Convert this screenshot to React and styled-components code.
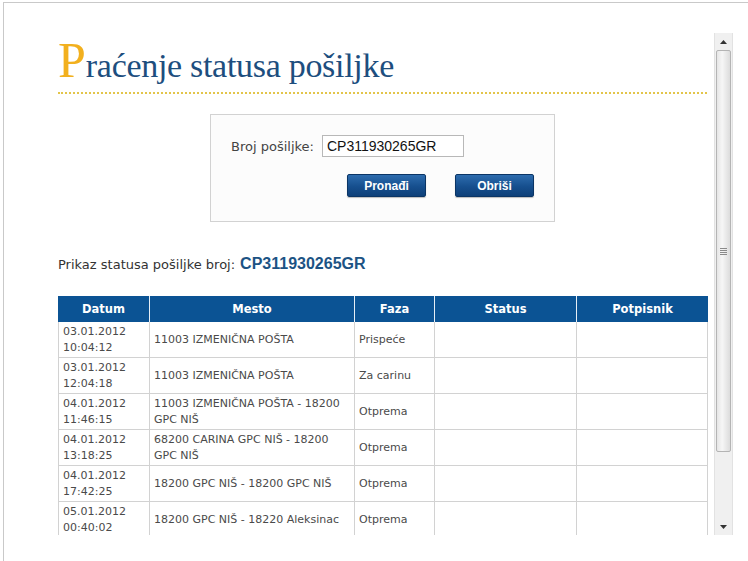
import React from "react";
import styled, { createGlobalStyle } from "styled-components";

const Global = createGlobalStyle`
  html, body { margin: 0; padding: 0; background: #fff; }
  body { font-family: "DejaVu Sans", Verdana, sans-serif; }
`;

const Screen = styled.div`
  width: 748px;
  height: 561px;
  padding: 2px 0 0 3px;
  box-sizing: border-box;
  overflow: hidden;
  background: #fff;
`;

const Frame = styled.div`
  height: 100%;
  border-top: 1px solid #c9c9c9;
  border-left: 1px solid #c9c9c9;
  box-sizing: border-box;
  padding-top: 30px;
`;

const Viewport = styled.div`
  display: flex;
  width: 729px;
  height: 502px;
`;

const Content = styled.div`
  flex: 1;
  overflow: hidden;
  padding: 4px 7px 0 54px;
  box-sizing: border-box;
`;

const Title = styled.h1`
  margin: 0;
  font-family: "Liberation Serif", "Times New Roman", serif;
  font-weight: normal;
  font-size: 34px;
  letter-spacing: -0.3px;
  line-height: 46px;
  color: #1d4e7e;
  white-space: nowrap;
`;

const Initial = styled.span`
  font-size: 50px;
  color: #f2b01e;
  letter-spacing: 0;
`;

const DottedRule = styled.div`
  margin-top: 3px;
  border-bottom: 2px dotted #e3c54a;
`;

const FormBox = styled.div`
  width: 345px;
  height: 108px;
  box-sizing: border-box;
  margin: 20px auto 0;
  border: 1px solid #d2d2d2;
  background: #fcfcfc;
  padding: 20px 20px 0 20px;
`;

const FieldRow = styled.div`
  display: flex;
  align-items: center;
  gap: 8px;
`;

const Label = styled.label`
  font-size: 13px;
  color: #444;
`;

const Input = styled.input`
  width: 142px;
  height: 22px;
  box-sizing: border-box;
  border: 1px solid #b8b8b8;
  padding: 0 4px;
  font-family: "Liberation Sans", Arial, sans-serif;
  font-size: 14px;
  color: #111;
  background: #fff;
  outline: none;
`;

const ButtonRow = styled.div`
  display: flex;
  gap: 29px;
  margin: 17px 0 0 116px;
`;

const Button = styled.button`
  width: 79px;
  height: 23px;
  border: 1px solid #0b3565;
  border-radius: 2px;
  background: linear-gradient(#2d6cae, #164f8e 55%, #0e4079);
  box-shadow: 0 1px 1px rgba(0,0,0,0.25);
  color: #fff;
  font-family: "Liberation Sans", Arial, sans-serif;
  font-weight: bold;
  font-size: 12px;
  padding: 0;
  cursor: pointer;
`;

const Summary = styled.div`
  margin-top: 33px;
  font-size: 13px;
  color: #333;
  display: flex;
  align-items: baseline;
  gap: 5px;
`;

const Number = styled.span`
  font-family: "Liberation Sans", Arial, sans-serif;
  font-weight: bold;
  font-size: 16px;
  color: #1c5384;
`;

const Table = styled.table`
  margin-top: 23px;
  width: 650px;
  table-layout: fixed;
  border-collapse: separate;
  border-spacing: 0;
`;

const Th = styled.th`
  background: #0b5394;
  color: #fff;
  font-size: 11.5px;
  font-weight: bold;
  height: 26px;
  padding: 0;
  text-align: center;
  border-right: 1px solid #e6eef6;
  &:last-child { border-right: none; }
`;

const Td = styled.td`
  font-size: 11px;
  line-height: 16px;
  color: #4a4a4a;
  padding: 2px 4px 1px;
  border-right: 1px solid #d2d2d2;
  border-bottom: 1px solid #d2d2d2;
  vertical-align: middle;
  &:first-child { border-left: 1px solid #d2d2d2; }
`;

const Scrollbar = styled.div`
  width: 17px;
  height: 100%;
  display: flex;
  flex-direction: column;
  background: #f0f0f0;
  border-left: 1px solid #e2e2e2;
  border-right: 1px solid #e2e2e2;
  box-sizing: content-box;
`;

const Arrow = styled.div`
  height: 17px;
  display: flex;
  align-items: center;
  justify-content: center;
  flex: none;
`;

const Thumb = styled.div`
  flex: 0 0 400px;
  margin: 0 1px;
  border: 1px solid #b4b4b4;
  border-radius: 2px;
  background: linear-gradient(90deg, #e6e6e6, #f6f6f6 40%, #dcdcdc);
  display: flex;
  align-items: center;
  justify-content: center;
`;

const Grip = styled.div`
  width: 7px;
  height: 7px;
  background: repeating-linear-gradient(#8a8a8a 0 1px, transparent 1px 2px);
`;

const Track = styled.div`
  flex: 1;
`;

const rows = [
  ["03.01.2012", "10:04:12", "11003 IZMENIČNA POŠTA", "Prispeće"],
  ["03.01.2012", "12:04:18", "11003 IZMENIČNA POŠTA", "Za carinu"],
  ["04.01.2012", "11:46:15", "11003 IZMENIČNA POŠTA - 18200 GPC NIŠ", "Otprema"],
  ["04.01.2012", "13:18:25", "68200 CARINA GPC NIŠ - 18200 GPC NIŠ", "Otprema"],
  ["04.01.2012", "17:42:25", "18200 GPC NIŠ - 18200 GPC NIŠ", "Otprema"],
  ["05.01.2012", "00:40:02", "18200 GPC NIŠ - 18220 Aleksinac", "Otprema"],
];

export default function App() {
  return (
    <>
      <Global />
      <Screen>
        <Frame>
          <Viewport>
            <Content>
              <Title>
                <Initial>P</Initial>raćenje statusa pošiljke
              </Title>
              <DottedRule />
              <FormBox>
                <FieldRow>
                  <Label>Broj pošiljke:</Label>
                  <Input defaultValue="CP311930265GR" />
                </FieldRow>
                <ButtonRow>
                  <Button>Pronađi</Button>
                  <Button>Obriši</Button>
                </ButtonRow>
              </FormBox>
              <Summary>
                Prikaz statusa pošiljke broj: <Number>CP311930265GR</Number>
              </Summary>
              <Table>
                <colgroup>
                  <col style={{ width: 92 }} />
                  <col style={{ width: 205 }} />
                  <col style={{ width: 80 }} />
                  <col style={{ width: 142 }} />
                  <col style={{ width: 131 }} />
                </colgroup>
                <thead>
                  <tr>
                    <Th>Datum</Th>
                    <Th>Mesto</Th>
                    <Th>Faza</Th>
                    <Th>Status</Th>
                    <Th>Potpisnik</Th>
                  </tr>
                </thead>
                <tbody>
                  {rows.map((r, i) => (
                    <tr key={i}>
                      <Td>
                        {r[0]}
                        <br />
                        {r[1]}
                      </Td>
                      <Td>{r[2]}</Td>
                      <Td>{r[3]}</Td>
                      <Td />
                      <Td />
                    </tr>
                  ))}
                </tbody>
              </Table>
            </Content>
            <Scrollbar>
              <Arrow>
                <svg width="7" height="4" viewBox="0 0 7 4"><path d="M0 4 L3.5 0 L7 4 Z" fill="#333" /></svg>
              </Arrow>
              <Thumb>
                <Grip />
              </Thumb>
              <Track />
              <Arrow>
                <svg width="7" height="4" viewBox="0 0 7 4"><path d="M0 0 L3.5 4 L7 0 Z" fill="#333" /></svg>
              </Arrow>
            </Scrollbar>
          </Viewport>
        </Frame>
      </Screen>
    </>
  );
}
